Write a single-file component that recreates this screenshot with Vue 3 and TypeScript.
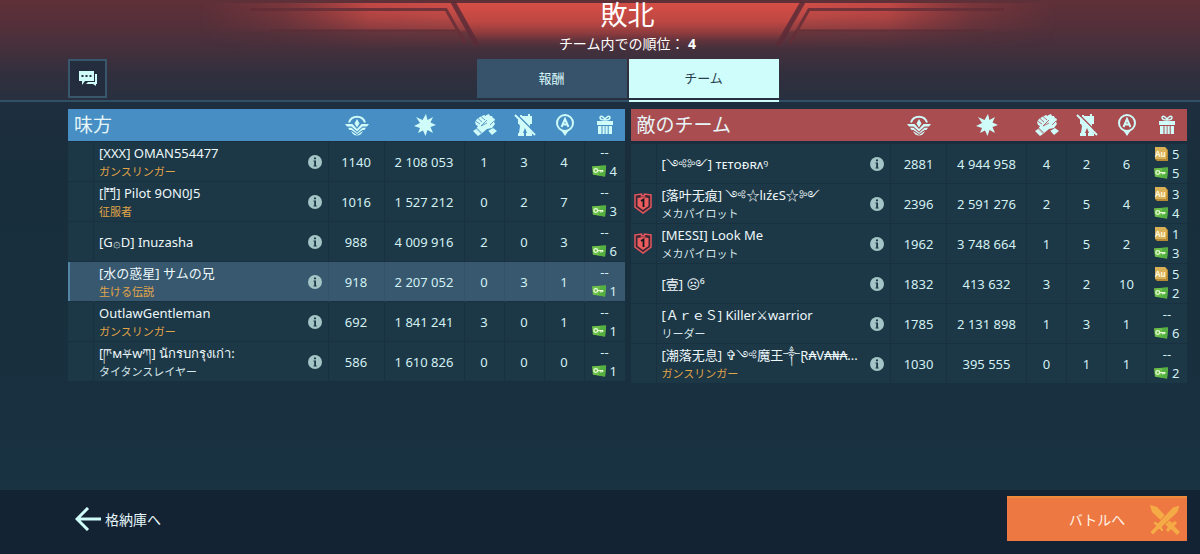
<script setup lang="ts">
interface Player {
  badge?: boolean
  name: string
  rank?: string
  gold?: boolean
  self?: boolean
  honor: number
  damage: string
  kills: number
  assists: number
  beacons: number
  au?: number
  keys: number
}

interface Team {
  id: string
  title: string
  players: Player[]
}

const teams: Team[] = [
  {
    id: 'ally',
    title: '味方',
    players: [
      { name: '[XXX] OMAN554477', rank: 'ガンスリンガー', gold: true, honor: 1140, damage: '2 108 053', kills: 1, assists: 3, beacons: 4, keys: 4 },
      { name: '[鬥] Pilot 9ON0J5', rank: '征服者', gold: true, honor: 1016, damage: '1 527 212', kills: 0, assists: 2, beacons: 7, keys: 3 },
      { name: '[G۞D] Inuzasha', honor: 988, damage: '4 009 916', kills: 2, assists: 0, beacons: 3, keys: 6 },
      { name: '[水の惑星] サムの兄', rank: '生ける伝説', gold: true, self: true, honor: 918, damage: '2 207 052', kills: 0, assists: 3, beacons: 1, keys: 1 },
      { name: 'OutlawGentleman', rank: 'ガンスリンガー', gold: true, honor: 692, damage: '1 841 241', kills: 3, assists: 0, beacons: 1, keys: 1 },
      { name: '[ཫм⛧wཀ] นักรบกรุงเก่า:', rank: 'タイタンスレイヤー', honor: 586, damage: '1 610 826', kills: 0, assists: 0, beacons: 0, keys: 1 },
    ],
  },
  {
    id: 'enemy',
    title: '敵のチーム',
    players: [
      { name: '[༺༻] ᴛᴇᴛᴏᴆʀᴧꝰ', honor: 2881, damage: '4 944 958', kills: 4, assists: 2, beacons: 6, au: 5, keys: 5 },
      { badge: true, name: '[落叶无痕] ༺☆lıźєS☆༻', rank: 'メカパイロット', honor: 2396, damage: '2 591 276', kills: 2, assists: 5, beacons: 4, au: 3, keys: 4 },
      { badge: true, name: '[MESSI] Look Me', rank: 'メカパイロット', honor: 1962, damage: '3 748 664', kills: 1, assists: 5, beacons: 2, au: 1, keys: 3 },
      { name: '[壹] ☹⁶', honor: 1832, damage: '413 632', kills: 3, assists: 2, beacons: 10, au: 5, keys: 2 },
      { name: '[ＡｒｅＳ] Killer⚔warrior', rank: 'リーダー', honor: 1785, damage: '2 131 898', kills: 1, assists: 3, beacons: 1, keys: 6 },
      { name: '[潮落无息] ✞༺魔王༒Ɽ₳V₳₦₳...', rank: 'ガンスリンガー', gold: true, honor: 1030, damage: '395 555', kills: 0, assists: 1, beacons: 1, keys: 2 },
    ],
  },
]
</script>

<template>
  <div class="page">
    <header class="head">
      <svg class="glow" viewBox="0 0 1200 60" aria-hidden="true">
        <defs>
          <linearGradient id="center" x1="0" y1="0" x2="0" y2="1">
            <stop offset="0" stop-color="#d64e46" />
            <stop offset="0.4" stop-color="#bd4742" />
            <stop offset="0.65" stop-color="#8c3b3e" />
            <stop offset="1" stop-color="#54303a" stop-opacity="0" />
          </linearGradient>
          <linearGradient id="left" x1="0" y1="0" x2="1" y2="0">
            <stop offset="0" stop-color="#a63b3d" stop-opacity="0" />
            <stop offset="0.3" stop-color="#b04240" stop-opacity="0.35" />
            <stop offset="0.6" stop-color="#c84a46" stop-opacity="0.95" />
            <stop offset="1" stop-color="#d65048" />
          </linearGradient>
          <linearGradient id="right" x1="1" y1="0" x2="0" y2="0">
            <stop offset="0" stop-color="#a63b3d" stop-opacity="0" />
            <stop offset="0.3" stop-color="#b04240" stop-opacity="0.35" />
            <stop offset="0.6" stop-color="#c84a46" stop-opacity="0.95" />
            <stop offset="1" stop-color="#d65048" />
          </linearGradient>
          <linearGradient id="fade" x1="0" y1="0" x2="0" y2="1">
            <stop offset="0" stop-color="#fff" />
            <stop offset="0.3" stop-color="#fff" stop-opacity="0.8" />
            <stop offset="0.56" stop-color="#fff" stop-opacity="0.5" />
            <stop offset="0.62" stop-color="#fff" stop-opacity="0.2" />
            <stop offset="1" stop-color="#fff" stop-opacity="0" />
          </linearGradient>
          <mask id="drop">
            <rect x="0" y="3" width="1200" height="47" fill="url(#fade)" />
          </mask>
        </defs>
        <path d="M453 3H801L776 50H480Z" fill="url(#center)" />
        <g mask="url(#drop)">
          <path d="M200 3H453L480 50H200Z" fill="url(#left)" />
          <path d="M1056 3H801L776 50H1056Z" fill="url(#right)" />
        </g>
        <path d="M453 2L477 45M803 2L778 45" stroke="#5c2c37" stroke-width="5" fill="none" opacity="0.85" />
        <path d="M250 9.500H446L465 43M1004 9.500H809L790 43" stroke="#642e37" stroke-width="3" fill="none" opacity="0.85" />
        <path d="M270 30.500H456M984 30.500H799" stroke="#5a2d37" stroke-width="2" fill="none" opacity="0.75" />
      </svg>
      <h1>敗北</h1>
      <p class="place">チーム内での順位： <b>4</b></p>
      <div class="bar">
        <button class="chat" type="button" aria-label="チャット">
          <svg width="20" height="16" viewBox="0 0 20 16">
            <path d="M1 0H16V10H7L4 14V10H1Z" fill="#cffbf9" />
            <path d="M17 3H19V13H18V15L15 13H8L10 11H17Z" fill="#cffbf9" />
            <path d="M3.500 4H5.500V6H3.500ZM7.500 4H9.500V6H7.500ZM11.500 4H13.500V6H11.500Z" fill="#26303f" />
          </svg>
        </button>
        <nav class="tabs">
          <button type="button" class="tab">報酬</button>
          <button type="button" class="tab active">チーム</button>
        </nav>
      </div>
    </header>

    <main class="teams">
      <table v-for="team in teams" :key="team.id" :class="team.id">
        <colgroup>
          <col class="c-badge" /><col /><col class="c-honor" /><col class="c-damage" />
          <col class="c-n" /><col class="c-n" /><col class="c-n" /><col class="c-n" />
        </colgroup>
        <thead>
          <tr>
            <th colspan="2" class="title">{{ team.title }}</th>
            <th>
              <svg width="24" height="22" viewBox="0 0 24 22" aria-label="名誉">
                <path d="M4 8.500A8.500 8.500 0 0 1 20 8.500" fill="none" stroke="#cffbf9" stroke-width="2" />
                <path d="M12 5L14.500 9.500L12 13.500L9.500 9.500Z" fill="#cffbf9" />
                <path d="M0 10H7.500L12 15L16.500 10H24L22 12.500H17.500L12 17.500L6.500 12.500H2Z" fill="#cffbf9" />
                <path d="M3 13.700H6.500L12 18.700L17.500 13.700H21L19.500 16H17.500L12 20L6.500 16H4.500Z" fill="#cffbf9" />
                <path d="M6 17L12 21L18 17Q16 21.500 12 21.500T6 17Z" fill="#cffbf9" />
              </svg>
            </th>
            <th>
              <svg width="22" height="22" viewBox="0 0 22 22" aria-label="ダメージ">
                <path d="M12 0L13.500 6L19 3L16.500 8.500L22 11L16.500 13L19 19L13.500 16L11.500 22L9 16.500L4 19L6 14L0 12L6 9L2 3L8.500 6Z" fill="#cffbf9" />
              </svg>
            </th>
            <th>
              <svg width="24" height="22" viewBox="0 0 24 22" aria-label="撃破">
                <path d="M2 8L4 5L7 3L11 1L12.500 2L13.500 1L16 0L17 2L19 2L20 4L22 5L21 8L22 10L19 14L14 15L8 20L3 15L5 12L3 11Z" fill="#cffbf9" />
                <path d="M2.500 7L7 10M5 4.500L9 8M8 2.500L12 6M14 6L8 12L14 9M17 11L21 7" stroke="var(--band)" stroke-width="0.800" fill="none" />
                <path d="M0 17L3 15L8 20L5 22ZM15 17L20 14L24 17L19 21Z" fill="#cffbf9" />
                <path d="M3.500 14L9 19.500M14 16L18 21" stroke="var(--band)" stroke-width="1" />
              </svg>
            </th>
            <th>
              <svg width="22" height="22" viewBox="0 0 22 22" aria-label="アシスト">
                <path d="M4 3H6V1H8V2H14V0H16V2H18V10H16V13L17 19H18V22H12V19H13L11 14L9 19H10V22H4V19H5L6 12L5 10H4Z" fill="#cffbf9" />
                <path d="M2.500 0L22 19.500" stroke="var(--band)" stroke-width="1.500" />
                <path d="M1 1L21 21" stroke="#cffbf9" stroke-width="2" />
              </svg>
            </th>
            <th>
              <svg width="18" height="22" viewBox="0 0 18 22" aria-label="ビーコン">
                <path d="M5 16L9 22L13 16Z" fill="#cffbf9" />
                <circle cx="9" cy="9" r="8" fill="var(--band)" stroke="#cffbf9" stroke-width="2" />
                <path d="M5.500 13L9 5L12.500 13M7 10.500H11" fill="none" stroke="#cffbf9" stroke-width="2" />
              </svg>
            </th>
            <th>
              <svg width="16" height="20" viewBox="0 0 16 20" aria-label="報酬">
                <path d="M8 5C5 5 3 4.500 3 2.500C3 0.500 7 1 8 5C9 1 13 0.500 13 2.500C13 4.500 11 5 8 5Z" fill="none" stroke="#cffbf9" stroke-width="1.500" />
                <path d="M0 6H16V10H0ZM1 11H4.500V19H1ZM5.500 11H7.700V19H5.500ZM8.500 11H10.700V19H8.500ZM11.700 11H15V19H11.700Z" fill="#cffbf9" />
              </svg>
            </th>
          </tr>
        </thead>
        <tbody>
          <tr v-for="p in team.players" :key="p.name" :class="{ self: p.self }">
            <td class="badge">
              <svg v-if="p.badge" width="18" height="21" viewBox="0 0 18 21" aria-label="1">
                <path d="M1 2L7.500 1V3L9 2.500L10.500 3V1L17 2V14L9 20L1 14Z" fill="#3a2733" stroke="#e4565f" stroke-width="1.500" />
                <path d="M3.500 5L9 4L14.500 5V13L9 17L3.500 13Z" fill="#ea5c5e" />
                <path d="M7 8L9.500 6.500V14" fill="none" stroke="#101820" stroke-width="1.800" />
              </svg>
            </td>
            <td class="who">
              <div class="line">
                <div class="names">
                  <div class="name">{{ p.name }}</div>
                  <div v-if="p.rank" class="rank" :class="{ gold: p.gold }">{{ p.rank }}</div>
                </div>
                <button class="info" type="button" aria-label="情報">
                  <svg width="14" height="14" viewBox="0 0 14 14">
                    <circle cx="7" cy="7" r="7" fill="#a3c5c6" />
                    <path d="M6 2.500H8V4.200H6ZM5.500 5.500H8V10.500H8.700V11.500H5.500V10.500H6.200V6.500H5.500Z" fill="#1d3a47" />
                  </svg>
                </button>
              </div>
            </td>
            <td>{{ p.honor }}</td>
            <td>{{ p.damage }}</td>
            <td>{{ p.kills }}</td>
            <td>{{ p.assists }}</td>
            <td>{{ p.beacons }}</td>
            <td class="prize">
              <div v-if="p.au" class="gain">
                <svg width="14" height="14" viewBox="0 0 14 14" aria-hidden="true">
                  <path d="M1 0H11L14 3V14H3L1 12Z" fill="#b98a35" />
                  <path d="M1 0H11L13 3L12 12H1Z" fill="#d9b258" />
                  <text x="1" y="10" class="au">Au</text>
                </svg>
                <span>{{ p.au }}</span>
              </div>
              <div v-else class="gain none">--</div>
              <div class="gain">
                <svg width="14" height="12" viewBox="0 0 15 12" aria-hidden="true">
                  <path d="M0 1L15 0L14 12L1 10Z" fill="#6cc04a" />
                  <path d="M9 0.500L15 0L14 12L7 11Z" fill="#55b042" />
                  <circle cx="4" cy="5.500" r="2" fill="none" stroke="#e9fbd8" stroke-width="1.300" />
                  <path d="M6 5.500H12M9.500 5.500V7.500M11.500 5.500V7" stroke="#e9fbd8" stroke-width="1.400" fill="none" />
                </svg>
                <span>{{ p.keys }}</span>
              </div>
            </td>
          </tr>
        </tbody>
      </table>
    </main>

    <footer class="foot">
      <button class="back" type="button">
        <svg width="26" height="24" viewBox="0 0 26 24" aria-hidden="true">
          <path d="M13 1L2 12L13 23M2 12H26" fill="none" stroke="#cffbf9" stroke-width="3" />
        </svg>
        格納庫へ
      </button>
      <button class="battle" type="button">
        <span>バトルへ</span>
        <svg width="32" height="32" viewBox="0 0 32 32" aria-hidden="true">
          <path d="M1 1L8 3L23 19L26 17L28 19L25 22L31 28L28 31L22 25L19 28L17 26L19 23L3 8Z" fill="#f5ab45" />
          <path d="M31 1L24 3L9 19L6 17L4 19L7 22L1 28L4 31L10 25L13 28L15 26L13 23L29 8Z" fill="#f5ab45" stroke="#ee7842" stroke-width="1" />
        </svg>
      </button>
    </footer>
  </div>
</template>

<style>
body {
  margin: 0;
  background: #182f3e;
}
</style>

<style scoped>
.page {
  min-height: 100vh;
  display: flex;
  flex-direction: column;
  background: linear-gradient(#1e2e3f 100px, #182e3d 180px, #18303f 420px, #193343 490px);
  color: #e6f6f8;
  font-family: "Noto Sans", "Noto Sans CJK JP", "DejaVu Sans", sans-serif;
  font-size: 13px;
}
button {
  font: inherit;
  color: inherit;
  border: 0;
  padding: 0;
  background: none;
  cursor: pointer;
}
svg {
  display: block;
}
.head {
  position: relative;
  padding: 0 13px 2px 68px;
  border-bottom: 2px solid #2f5065;
  background: linear-gradient(#5f3038, #55303a 24px, #45303c 48px, #302f3e 76px, #28303f);
  text-align: center;
}
.glow {
  position: absolute;
  top: 0;
  left: 50%;
  width: 1200px;
  height: 60px;
  transform: translateX(-50%);
}
h1 {
  position: relative;
  margin: 0;
  font-family: "Liberation Sans", "Noto Sans CJK JP", sans-serif;
  font-size: 27px;
  font-weight: 400;
  line-height: 32px;
  color: #fff;
}
.place {
  position: relative;
  margin: 0 0 3px;
  font-size: 14px;
  line-height: 24px;
  color: #fff;
}
.bar {
  position: relative;
  display: grid;
  grid-template-columns: 1fr auto 1fr;
}
.chat {
  box-sizing: border-box;
  width: 39px;
  height: 39px;
  display: grid;
  place-items: center;
  border: 2px solid #38566c;
  background: #232d3e;
}
.tabs {
  display: flex;
  gap: 2px;
}
.tab {
  width: 150px;
  height: 39px;
  padding-bottom: 2px;
  background: #36536b;
  color: #d9f7f9;
}
.tab.active {
  background: #cffdfb;
  color: #27404c;
  box-shadow: 0 2px #28303f, 0 4px #cffdfb;
}
.teams {
  display: grid;
  grid-template-columns: 1fr 1fr;
  align-items: start;
  gap: 6px;
  padding: 7px 13px 16px 68px;
}
table {
  width: 100%;
  table-layout: fixed;
  border-collapse: separate;
  border-spacing: 0;
}
.ally {
  --band: #468ec3;
  --under: 1px;
}
.enemy {
  --band: #a94d51;
  --under: 3px;
}
.c-badge {
  width: 26px;
}
.c-honor {
  width: 56px;
}
.c-damage {
  width: 80px;
}
.c-n {
  width: 40px;
}
th {
  height: 32px;
  padding: 0;
  background: var(--band);
  background-clip: padding-box;
  border-bottom: var(--under) solid transparent;
}
th svg {
  margin: 0 auto;
}
.title {
  padding-left: 6px;
  text-align: left;
  font-size: 19px;
  font-weight: 400;
  line-height: 24px;
}
td {
  box-sizing: border-box;
  height: 40px;
  padding: 0;
  text-align: center;
  color: #d3f1f3;
  background: #1c3745;
  border-right: 1px solid #183040;
  border-bottom: 1px solid #183040;
}
td:last-child {
  border-right: 0;
}
.self td {
  background: #37586f;
  border-right-color: #34536a;
}
.self .badge {
  box-shadow: inset 2px 0 #5585a5;
  border-right-color: #37586f;
}
.badge svg {
  margin: 0 auto;
}
.who {
  padding: 0 6px 0 5px;
  text-align: left;
}
.line {
  display: flex;
  align-items: center;
  gap: 8px;
}
.names {
  flex: 1;
  min-width: 0;
}
.name {
  white-space: nowrap;
  line-height: 20px;
  color: #eef8fb;
}
.rank {
  font-size: 11px;
  line-height: 18px;
  color: #d6e6ea;
}
.rank.gold {
  color: #e2a548;
}
.gain {
  display: flex;
  align-items: center;
  gap: 4px;
  padding-left: 7px;
  line-height: 19px;
}
.gain.none {
  justify-content: center;
  padding-left: 0;
}
.au {
  font-size: 8px;
  font-weight: 700;
  fill: #fff6dc;
}
.foot {
  box-sizing: border-box;
  min-height: 64px;
  margin-top: auto;
  padding: 6px 13px 13px 75px;
  display: flex;
  align-items: center;
  justify-content: space-between;
  background: #132334;
}
.back {
  display: flex;
  align-items: center;
  gap: 4px;
  font-size: 14px;
}
.battle {
  position: relative;
  width: 180px;
  height: 45px;
  background: #ee7842;
  box-shadow: inset 0 2px #f08a3c;
  color: #fff3e6;
  font-size: 14px;
}
.battle svg {
  position: absolute;
  right: 6px;
  top: 8px;
}
</style>
